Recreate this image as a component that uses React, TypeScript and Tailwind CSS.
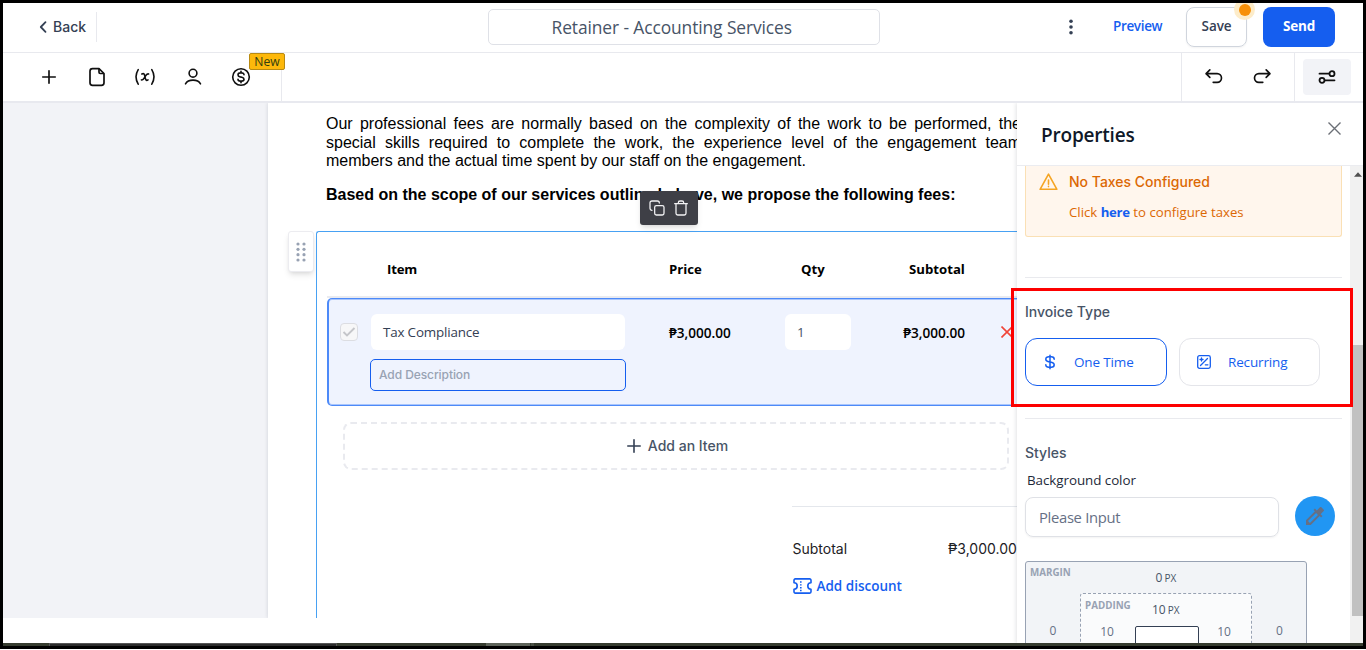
import React from "react";

const UI = "font-['Open_Sans','Noto_Sans',sans-serif]";
const INTER = "font-['Inter','Open_Sans',sans-serif]";

type IconProps = { className?: string; size?: number; sw?: number; children: React.ReactNode };

function Icon({ className = "", size = 24, sw = 2, children }: IconProps) {
  return (
    <svg
      className={`shrink-0 ${className}`}
      width={size}
      height={size}
      viewBox="0 0 24 24"
      fill="none"
      stroke="currentColor"
      strokeWidth={sw}
      strokeLinecap="round"
      strokeLinejoin="round"
    >
      {children}
    </svg>
  );
}

function Header() {
  return (
    <header className="flex h-[50px] shrink-0 items-center border-b border-[#e8e9ee] pb-px text-sm text-[#344054]">
      <div className="flex h-[30px] w-[94px] items-center border-r border-[#e8e9ee] pl-9">
        <svg width="9" height="14" viewBox="0 0 9 14" fill="none" stroke="currentColor" strokeWidth="1.8" strokeLinecap="round" strokeLinejoin="round">
          <path d="M6.500 2.200 1.800 7l4.700 4.800" />
        </svg>
        <span className={`ml-[5px] font-medium ${INTER}`}>Back</span>
      </div>
      <div className={`ml-[391px] flex h-9 w-[392px] items-center rounded-[5px] border border-[#dfe1e7] pl-[62.500px] text-[17.400px] tracking-[-0.100px] whitespace-nowrap text-[#475467] ${UI}`}>
        Retainer - Accounting Services
      </div>
      <svg className="ml-[187px]" width="8" height="18" viewBox="0 0 8 18" fill="#344054">
        <circle cx="4" cy="3.3" r="1.8" />
        <circle cx="4" cy="9" r="1.8" />
        <circle cx="4" cy="14.7" r="1.8" />
      </svg>
      <span className={`ml-[38px] w-[50px] text-[13.500px] font-semibold tracking-[-0.350px] whitespace-nowrap text-[#155eef] ${UI}`}>Preview</span>
      <div className={`relative ml-[23px] flex h-10 w-[61px] items-center justify-center rounded-lg border border-[#d0d5dd] text-[13.500px] font-semibold tracking-[-0.100px] shadow-xs ${UI}`}>
        Save
        <span className="absolute -top-[9px] -right-[9px] flex h-[21px] w-[21px] items-center justify-center rounded-full bg-[#fdecc9] [clip-path:inset(4px_0_0_0)]">
          <span className="h-3 w-3 rounded-full bg-[#f79009]" />
        </span>
      </div>
      <div className={`ml-4 flex h-10 w-[72px] items-center justify-center rounded-lg bg-[#155eef] text-[13.500px] font-bold tracking-[-0.200px] text-white ${UI}`}>
        Send
      </div>
    </header>
  );
}

function Toolbar() {
  return (
    <div className="flex h-[50px] shrink-0 items-center border-b-2 border-[#e8e9ef] text-[#101010]">
      <div className="relative flex h-full w-[279px] items-center border-r border-[#e8e9ee] pl-9">
        <Icon size={20}>
          <path d="M12 4.500v15M4.500 12h15" />
        </Icon>
        <svg className="ml-7 shrink-0" width="20" height="20" viewBox="0 0 20 20" fill="none" stroke="currentColor" strokeWidth="1.700" strokeLinejoin="round">
          <path d="M12 1.700H5.500a2.500 2.500 0 0 0-2.500 2.500v11.600a2.500 2.500 0 0 0 2.500 2.500h9a2.500 2.500 0 0 0 2.500-2.500V6.500z" />
          <path d="M12 1.700v3.600a1.200 1.200 0 0 0 1.200 1.200H17" />
        </svg>
        <svg className="ml-7 shrink-0" width="20" height="20" viewBox="0 0 20 20" fill="none" stroke="currentColor" strokeWidth="1.600" strokeLinecap="round" strokeLinejoin="round">
          <path d="M3.200 2.600c-2.600 4.300-2.600 10.200 0 14.600M16.800 2.600c2.600 4.300 2.600 10.200 0 14.600" />
          <path d="M6.800 6.900c2.600-1 2.700.600 3.200 3s1 4.300 3 3M13.600 7c-1.700-.700-2.500 1-3.600 2.900s-2.100 3.800-3.600 3" />
        </svg>
        <svg className="ml-7 shrink-0" width="20" height="20" viewBox="0 0 20 20" fill="none" stroke="currentColor" strokeWidth="1.600" strokeLinecap="round">
          <circle cx="10" cy="6.200" r="3.900" />
          <path d="M2.500 16.800c1.300-2.300 4-3.700 7.500-3.700s6.200 1.400 7.500 3.700" />
        </svg>
        <svg className="ml-7 shrink-0" width="20" height="20" viewBox="0 0 20 20" fill="none" stroke="currentColor" strokeWidth="1.600" strokeLinecap="round" strokeLinejoin="round">
          <circle cx="10" cy="10" r="8.300" />
          <path d="M13 7.800c0-1.100-1-1.900-2.400-1.900H9.400C8 5.900 7 6.700 7 7.900s.900 1.700 2.200 2l1.600.300c1.300.300 2.200.900 2.200 2s-1 1.900-2.400 1.900H9.400C8 14.100 7 13.300 7 12.200M10 4.300v1.600M10 14.100v1.600" />
        </svg>
        <span className={`absolute top-0 left-[246px] flex h-[17px] w-9 items-center justify-center rounded-[2px] border border-[#b88a12] bg-[#fdb80b] pt-[2px] text-[12.200px] font-medium text-[#33400f] ${UI}`}>
          New
        </span>
      </div>
      <div className="ml-auto flex h-full w-[114px] items-center gap-7 border-x border-[#e8e9ee] pl-[22px]">
        <Icon size={20}>
          <path d="M7 3.500 2.500 8 7 12.500M2.500 8h13.300a5.200 5.200 0 0 1 0 10.400H11" />
        </Icon>
        <Icon size={20}>
          <path d="m17 3.500 4.500 4.500-4.500 4.500M21.500 8H8.200a5.200 5.200 0 0 0 0 10.400H13" />
        </Icon>
      </div>
      <div className="mr-3 ml-2 flex h-9 w-12 items-center justify-center rounded bg-[#f2f3f7]">
        <svg width="18" height="16" viewBox="0 0 18 16" fill="none" stroke="currentColor" strokeWidth="1.800" strokeLinecap="round">
          <circle cx="14" cy="4.700" r="2.500" />
          <path d="M1.500 4.700H11M7 11.300h9.500" />
          <circle cx="4" cy="11.300" r="2.500" />
        </svg>
      </div>
    </div>
  );
}

function ItemRow() {
  return (
    <div className="ml-[10px] h-[108px] w-[720px] rounded-[5px] border-y border-l-2 border-[#4d8af8] bg-[#eff3fe] pt-[15px] shadow-[inset_0_1px_#a9c5fc,inset_0_-1px_#a9c5fc]">
      <div className="flex h-9 items-center pl-[11px]">
        <span className="flex h-[18px] w-[18px] items-center justify-center rounded-[4px] border border-[#dcdde2] bg-[#f7f7f8]">
          <svg width="14" height="12" viewBox="0 0 14 12" fill="none" stroke="#c5c6ca" strokeWidth="1.900">
            <path d="m1.500 6 3.500 3.500L12.500 2" />
          </svg>
        </span>
        <span className={`ml-[13px] flex h-9 w-[254px] items-center rounded-md bg-white pl-3 text-[13.400px] tracking-[-0.170px] text-[#344054] ${UI}`}>
          Tax Compliance
        </span>
        <span className={`ml-11 w-[116px] pt-px text-[13.600px] font-semibold text-black ${UI}`}>₱3,000.00</span>
        <span className={`flex h-9 w-[66px] items-center rounded-md bg-white pl-3 text-[13.400px] text-[#475467] ${UI}`}>1</span>
        <span className={`w-[114px] pt-px text-right text-[13.600px] font-semibold text-black ${UI}`}>₱3,000.00</span>
        <svg className="mb-px ml-9 shrink-0" width="12" height="12" viewBox="0 0 12 12" stroke="#f04438" strokeWidth="1.600">
          <path d="m.500.500 11 11M11.500.500l-11 11" />
        </svg>
      </div>
      <div className={`mt-[9px] ml-[41px] flex h-8 w-64 items-center rounded-[5px] border border-[#155eef] pl-2 text-[12px] font-medium tracking-[-0.080px] text-[#98a2b3] ${INTER}`}>
        Add Description
      </div>
    </div>
  );
}

function ProductTable() {
  return (
    <div className="relative h-[387px] w-[720px] shrink-0 rounded-tl-[3px] border-t border-l border-[#47a1f3]">
      <div className={`flex h-[64px] items-center pt-[11px] pl-[70px] text-[13.200px] font-bold text-black ${UI}`}>
        <span className="w-[282px] tracking-[-0.200px]">Item</span>
        <span className="w-[132px]">Price</span>
        <span className="w-[108px]">Qty</span>
        <span>Subtotal</span>
      </div>
      <div className="ml-[10px] h-0.5 w-[720px] bg-[#eaebf0]" />
      <ItemRow />
      <div className={`mt-4 ml-[26px] flex h-12 w-[666px] items-center justify-center rounded-lg border-2 border-dashed border-[#e9eaef] pl-[3px] text-sm font-medium text-[#475467] ${INTER}`}>
        <svg className="mr-[7px]" width="14" height="14" viewBox="0 0 14 14" stroke="#344054" strokeWidth="1.600" strokeLinecap="round">
          <path d="M7 .800v12.400M.800 7h12.400" />
        </svg>
        Add an Item
      </div>
      <div className="mt-9 ml-[475px] w-[245px] border-t border-[#e4e7ec] pt-[31px]">
        <div className={`flex h-5 items-center pl-[0.500px] text-[14px] text-[#1d2125] ${INTER}`}>
          <span className="w-[155.500px]">Subtotal</span>
          <span>₱3,000.00</span>
        </div>
        <div className={`mt-[18px] flex h-5 items-center pl-[0.500px] text-[13.500px] font-semibold text-[#155eef] ${UI}`}>
          <svg className="mr-[5px]" width="19" height="16" viewBox="0 0 19 16" fill="none" stroke="currentColor" strokeWidth="1.600" strokeLinejoin="round">
            <path d="M2.300.900h14.400a1.300 1.300 0 0 1 1.300 1.300v2.600a3.200 3.200 0 0 0 0 6.400v2.600a1.300 1.300 0 0 1-1.300 1.300H2.300A1.300 1.300 0 0 1 1 13.800v-2.600a3.200 3.200 0 0 0 0-6.400V2.200A1.300 1.300 0 0 1 2.300.900z" />
            <path d="M7.800 3.200v1.600M7.800 6.200v1.400M7.800 9v1.400M7.800 11.800v1.400" />
          </svg>
          Add discount
        </div>
      </div>
      <div className="absolute -top-[41px] left-[323px] flex h-[34px] w-[58px] items-center justify-center gap-2 rounded-[3px] bg-[#3e3f46] text-[#f2f2f4] shadow-md">
        <Icon size={16} sw={1.900}>
          <rect x="8.500" y="8.500" width="14" height="14" rx="2.500" />
          <path d="M4.500 15.500c-1.600 0-3-1.200-3-3v-8c0-1.800 1.200-3 3-3h8c1.800 0 3 1.400 3 3" />
        </Icon>
        <Icon size={16} sw={1.900}>
          <path d="M2.500 5.500h19M4.500 5.500v14.500a2.500 2.500 0 0 0 2.500 2.500h10a2.500 2.500 0 0 0 2.500-2.500V5.500M8 5.500V4a2.500 2.500 0 0 1 2.500-2.500h3A2.500 2.500 0 0 1 16 4v1.500" />
        </Icon>
      </div>
    </div>
  );
}

function Document() {
  return (
    <main className="flex h-[515px] w-[1014px] shrink-0 overflow-hidden bg-[#f2f3f7]">
      <div className="w-[265px] shrink-0" />
      <div className="w-[760px] shrink-0 bg-white shadow-[0_0_4px_rgba(16,24,40,0.15)]">
        <div className="ml-[58px] w-[695px] pt-[12.300px] font-['Liberation_Sans',Arial,sans-serif] text-[16px] leading-[18.400px] text-black">
          <p className="text-justify">
            Our professional fees are normally based on the complexity of the work to be performed, the special skills required to complete the work, the experience level of the engagement team members and the actual time spent by our staff on the engagement.
          </p>
          <p className="mt-[15.500px] font-bold whitespace-nowrap">Based on the scope of our services outlined above, we propose the following fees:</p>
        </div>
        <div className="mt-[27px] flex items-start pl-5">
          <div className="mr-0.5 flex h-[41px] w-[26px] shrink-0 items-center justify-center rounded-[3px] border border-[#ececf0] bg-white shadow-md">
            <svg width="10" height="20" viewBox="0 0 10 20" fill="#98a2b3">
              {[2, 7.3, 12.7, 18].map((y) => (
                <g key={y}>
                  <circle cx="2" cy={y} r="1.600" />
                  <circle cx="8" cy={y} r="1.600" />
                </g>
              ))}
            </svg>
          </div>
          <ProductTable />
        </div>
      </div>
    </main>
  );
}

function BoxModel() {
  return (
    <div className={`mt-6 h-[160px] w-[282px] shrink-0 rounded-t-[3px] border border-[#98a2b3] bg-[#f2f4f7] text-[12px] text-[#667085] ${UI}`}>
      <div className="grid h-[31px] grid-cols-3">
        <span className="pt-[4px] pl-1 text-[9.800px] font-bold text-[#98a2b3]">MARGIN</span>
        <span className="pt-[7px] text-center leading-[18px] text-[#475467]">0 <small className="-ml-px text-[10px]">PX</small></span>
      </div>
      <div className="flex">
        <span className="w-[54px] pt-[29px] text-center leading-[18px]">0</span>
        <div className="h-[130px] w-[172px] rounded-t-[3px] border border-dashed border-[#98a2b3] bg-[#fafbfc]">
          <div className="flex h-8">
            <span className="w-[71px] pt-[4px] pl-1 text-[9.800px] leading-4 font-bold text-[#98a2b3]">PADDING</span>
            <span className="pt-[7px] leading-[18px] text-[#475467]">10 <small className="-ml-px text-[10px]">PX</small></span>
          </div>
          <div className="flex">
            <span className="w-[54px] pr-0.5 text-center leading-[12px]">10</span>
            <span className="h-[60px] w-16 rounded-t-[2px] border border-[#344054] bg-white" />
            <span className="w-[50px] text-center leading-[12px]">10</span>
          </div>
        </div>
        <span className="w-[54px] pt-[29px] pl-px text-center leading-[18px]">0</span>
      </div>
    </div>
  );
}

function PropertiesPanel() {
  return (
    <aside className="relative z-10 flex h-[540px] w-[346px] shrink-0 flex-col bg-white shadow-[-1px_0_4px_rgba(16,24,40,0.12)]">
      <div className="flex h-[63px] shrink-0 justify-between border-b border-[#ebecf0] pr-[22.500px] pl-6">
        <h2 className={`pt-[18px] text-[19px] leading-7 font-semibold tracking-[-0.200px] text-[#101828] ${UI}`}>Properties</h2>
        <svg className="mt-[18.500px]" width="13" height="13" viewBox="0 0 13 13" stroke="#6b6f76" strokeWidth="1.400">
          <path d="m.500.500 12 12M12.500.500l-12 12" />
        </svg>
      </div>
      <div className="flex min-h-0 flex-1 overflow-hidden">
        <div className="flex w-[333px] flex-col pl-2">
          <div className="flex h-[71px] w-[317px] shrink-0 rounded-b-[3px] border border-t-0 border-[#fae0b5] bg-[#fff6ed] pl-[14px] text-[#dc6803]">
            <svg className="mt-[7px] -ml-px mr-px" width="19" height="18" viewBox="0 0 19 18" fill="none" stroke="#f5a524" strokeWidth="1.600" strokeLinejoin="round" strokeLinecap="round">
              <path d="M9.500 1.200 1.100 16.300h16.800z" />
              <path d="M9.500 7v4.300M9.500 13.400v.200" />
            </svg>
            <div className="ml-[10px]">
              <p className={`pt-[6px] text-sm leading-5 font-medium whitespace-nowrap ${INTER}`}>No Taxes Configured</p>
              <p className={`mt-[10px] text-[13.200px] leading-5 whitespace-nowrap ${UI}`}>
                Click <b className="font-bold tracking-[-0.250px] text-[#155eef]">here</b> to configure taxes
              </p>
            </div>
          </div>
          <div className="mt-10 h-px w-[317px] shrink-0 bg-[#e9eaee]" />
          <h3 className={`mt-6 shrink-0 text-sm leading-5 font-medium text-[#475467] ${INTER}`}>Invoice Type</h3>
          <div className={`mt-4 flex shrink-0 gap-3 text-[13.500px] tracking-[-0.150px] text-[#155eef] ${UI}`}>
            <div className="flex h-12 w-[142px] items-center rounded-xl border border-[#155eef] pl-[18px]">
              <svg width="12" height="16" viewBox="0 0 12 16" fill="none" stroke="currentColor" strokeWidth="1.500" strokeLinecap="round">
                <path d="M10.200 5.200c0-1.600-1.200-2.500-3-2.500H4.800C3 2.700 1.800 3.600 1.800 5.200s1.200 2.200 2.900 2.500l2.600.500c1.700.400 2.900 1 2.900 2.600s-1.200 2.500-3 2.500H4.800c-1.800 0-3-.900-3-2.500M6 1.300v13.400" />
              </svg>
              <span className="ml-[18px] whitespace-nowrap">One Time</span>
            </div>
            <div className="flex h-12 w-[141px] items-center rounded-xl border border-[#e4e5ea] pl-[17px]">
              <svg width="14" height="14" viewBox="0 0 14 14" fill="none" stroke="currentColor" strokeWidth="1.300" strokeLinecap="round">
                <rect x=".7" y=".7" width="12.600" height="12.600" rx="1.800" />
                <path d="m3.500 10.500 7-7M3 4.500h3M4.500 3v3M8.300 9.800h2.600" />
              </svg>
              <span className="ml-[17px] whitespace-nowrap">Recurring</span>
            </div>
          </div>
          <div className="mt-8 h-px w-[317px] shrink-0 bg-[#e9eaee]" />
          <h3 className={`mt-6 shrink-0 text-sm leading-5 font-medium text-[#475467] ${INTER}`}>Styles</h3>
          <label className={`mt-[7px] shrink-0 pl-0.5 text-[13.400px] leading-5 tracking-[-0.060px] text-[#1d2939] ${UI}`}>Background color</label>
          <div className="mt-[7px] flex shrink-0">
            <div className={`flex h-10 w-[254px] items-center rounded-lg border border-[#dfe1e6] pl-[13px] text-[14.800px] tracking-[-0.320px] text-[#667085] shadow-xs ${UI}`}>
              Please Input
            </div>
            <div className="-mt-px ml-4 flex h-10 w-10 items-center justify-center rounded-full bg-[#2196f3] text-[#667085]">
              <svg width="24" height="24" viewBox="0 0 24 24" fill="currentColor">
                <path d="M20.710 5.630l-2.340-2.340a1 1 0 0 0-1.410 0l-3.120 3.120-1.930-1.910-1.410 1.410 1.420 1.420L3 16.250V21h4.750l8.920-8.920 1.420 1.420 1.410-1.410-1.920-1.920 3.120-3.120a1 1 0 0 0 .010-1.420zM6.920 19 5 17.080l8.060-8.060 1.920 1.920z" />
              </svg>
            </div>
          </div>
          <BoxModel />
        </div>
        <div className="flex w-[13px] flex-col items-end bg-[#f1f1f1]">
          <svg className="mt-[6px] mr-[1px] shrink-0" width="8" height="6" viewBox="0 0 9 6" fill="#505050">
            <path d="M4.500 0 9 5H0z" />
          </svg>
          <div className="mt-[167px] h-[271px] w-[11px] shrink-0 bg-[#c1c1c1]" />
        </div>
      </div>
    </aside>
  );
}

export default function App() {
  return (
    <div className="relative h-[650px] w-[1366px] overflow-hidden bg-white">
      <div className="flex h-[649px] w-full flex-col border-[3px] border-black bg-white">
        <Header />
        <Toolbar />
        <div className="flex h-[540px] shrink-0 overflow-hidden">
          <Document />
          <PropertiesPanel />
        </div>
        <div className="flex h-[3px] shrink-0 bg-[#363c2f]">
          <div className="ml-[46px] w-[288px] border-x border-t border-[#555] bg-[#2b2b2b]" />
          <div className="ml-[149px] w-11 bg-[#5d6359]" />
          <div className="ml-px w-[3px] bg-[#4a5045]" />
        </div>
      </div>
      <div className="absolute top-[288px] left-[1011px] z-20 h-[119px] w-[342px] border-[3px] border-[#fd0000]" />
    </div>
  );
}
